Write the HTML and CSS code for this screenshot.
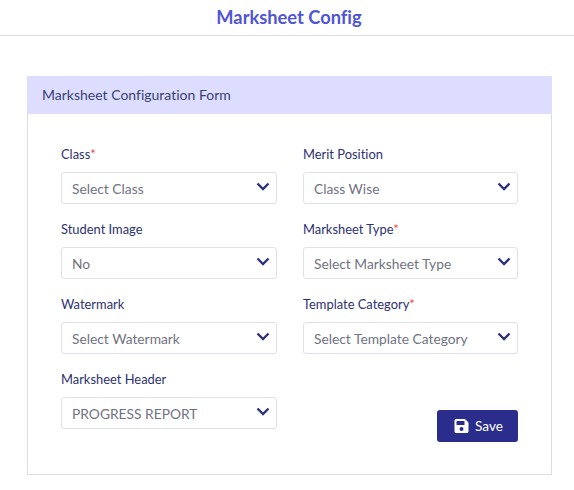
FILE: index.html
```html
<!DOCTYPE html>
<html lang="en">
<head>
<meta charset="utf-8">
<title>Marksheet Config</title>
<link rel="stylesheet" href="styles.css">
</head>
<body>
<header class="topbar"><h1>Marksheet Config</h1></header>
<main class="page">
  <section class="card">
    <h2 class="card-head">Marksheet Configuration Form</h2>
    <form class="card-body">
      <div class="field"><label>Class<span class="req">*</span></label>
        <div class="select"><span>Select Class</span><svg class="chev" viewBox="0 0 14 9"><path d="M1.5 1.5 7 7l5.5-5.5"/></svg></div></div>
      <div class="field"><label>Merit Position</label>
        <div class="select"><span>Class Wise</span><svg class="chev" viewBox="0 0 14 9"><path d="M1.5 1.5 7 7l5.5-5.5"/></svg></div></div>
      <div class="field"><label>Student Image</label>
        <div class="select"><span>No</span><svg class="chev" viewBox="0 0 14 9"><path d="M1.5 1.5 7 7l5.5-5.5"/></svg></div></div>
      <div class="field"><label>Marksheet Type<span class="req">*</span></label>
        <div class="select"><span>Select Marksheet Type</span><svg class="chev" viewBox="0 0 14 9"><path d="M1.5 1.5 7 7l5.5-5.5"/></svg></div></div>
      <div class="field"><label>Watermark</label>
        <div class="select"><span>Select Watermark</span><svg class="chev" viewBox="0 0 14 9"><path d="M1.5 1.5 7 7l5.5-5.5"/></svg></div></div>
      <div class="field"><label>Template Category<span class="req">*</span></label>
        <div class="select"><span>Select Template Category</span><svg class="chev" viewBox="0 0 14 9"><path d="M1.5 1.5 7 7l5.5-5.5"/></svg></div></div>
      <div class="field"><label>Marksheet Header</label>
        <div class="select"><span>PROGRESS REPORT</span><svg class="chev" viewBox="0 0 14 9"><path d="M1.5 1.5 7 7l5.5-5.5"/></svg></div></div>
      <div class="actions">
        <button type="button" class="save"><svg viewBox="0 0 448 512"><path d="M433.9 130 350 46.1A48 48 0 0 0 316.1 32H48A48 48 0 0 0 0 80v352a48 48 0 0 0 48 48h352a48 48 0 0 0 48-48V163.9a48 48 0 0 0-14.1-33.9zM224 416a64 64 0 1 1 0-128 64 64 0 0 1 0 128zm96-304.5V212a12 12 0 0 1-12 12H76a12 12 0 0 1-12-12V108a12 12 0 0 1 12-12h228.5a12 12 0 0 1 8.5 3.5l3.5 3.5a12 12 0 0 1 3.5 8.5z"/></svg>Save</button>
      </div>
    </form>
  </section>
</main>
</body>
</html>
```
FILE: styles.css
```css
* { box-sizing: border-box; }
html, body { margin: 0; padding: 0; }
body { background: #fff; font-family: Lato, "Noto Sans", sans-serif; font-variant-ligatures: none; width: 574px; height: 490px; overflow: hidden; }
.topbar { height: 36px; border-bottom: 1px solid #dcdce8; display: flex; align-items: center; justify-content: center; }
.topbar h1 { margin: 0; font-size: 18.3px; font-weight: 700; color: #4f55d6; position: relative; top: -1px; left: 2px; }
.page { padding: 40px 22px 0 27px; }
.card { border: 1px solid #dcdcf0; border-top: 0; height: 399px; }
.card-head { margin: 0 -1px; height: 38px; background: #dddeff; color: #3a3f72; font-size: 14px; font-weight: 400; line-height: 38px; padding-left: 15px; }
.card-body { display: grid; grid-template-columns: 216px 215px; column-gap: 26px; grid-auto-rows: 75px; padding: 32px 0 0 33px; }
.field { display: flex; flex-direction: column; }
label { font-size: 12.9px; line-height: 16px; height: 26px; color: #2d3270; }
.req { color: #e5484d; }
.select { height: 32px; border: 1px solid #dfe0ee; border-radius: 3px; display: flex; align-items: center; justify-content: space-between; padding: 1px 6px 0 10px; font-size: 13.8px; color: #70737f; }
.chev { width: 14px; height: 9px; margin-top: -4px; fill: none; stroke: #2f3278; stroke-width: 2.4; }
.actions { display: flex; justify-content: flex-end; align-items: flex-start; padding-top: 39px; }
.save { width: 81px; height: 32px; background: #2a2d8c; color: #fff; border: 0; border-radius: 3px; font: 13.6px Lato, sans-serif; display: flex; align-items: center; justify-content: center; gap: 6px; padding: 0 0 0 2px; }
.save svg { width: 15px; height: 16px; fill: #fff; }
```
